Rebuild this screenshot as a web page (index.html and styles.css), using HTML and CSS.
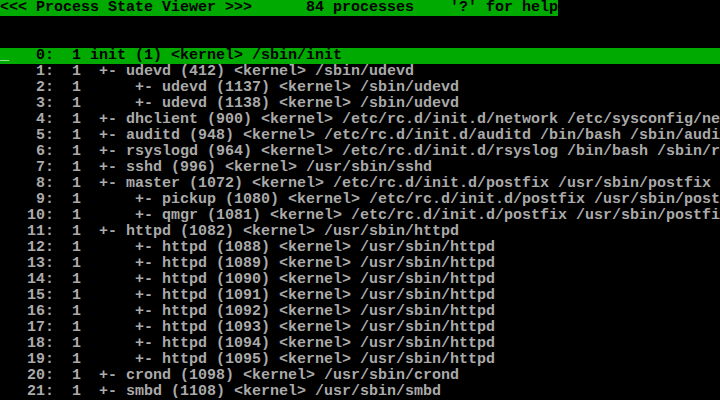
FILE: index.html
```html
<!DOCTYPE html>
<html lang='en'>
<head>
    <meta charset='UTF-8'>
    <title>Process State Viewer</title>
    <link rel="stylesheet" href="styles.css">
</head>

<body>
    <div class='screen'>
        <div class='row'><span class='title-bar'>&lt;&lt;&lt; Process State Viewer &gt;&gt;&gt;      84 processes    '?' for help</span></div>
        <div class='row'></div>
        <div class='row'></div>
        <div class='row selected'><span class='cursor'>_</span>   0:  1 init (1) &lt;kernel&gt; /sbin/init</div>
        <div class='row'>    1:  1  +- udevd (412) &lt;kernel&gt; /sbin/udevd</div>
        <div class='row'>    2:  1      +- udevd (1137) &lt;kernel&gt; /sbin/udevd</div>
        <div class='row'>    3:  1      +- udevd (1138) &lt;kernel&gt; /sbin/udevd</div>
        <div class='row'>    4:  1  +- dhclient (900) &lt;kernel&gt; /etc/rc.d/init.d/network /etc/sysconfig/ne</div>
        <div class='row'>    5:  1  +- auditd (948) &lt;kernel&gt; /etc/rc.d/init.d/auditd /bin/bash /sbin/audi</div>
        <div class='row'>    6:  1  +- rsyslogd (964) &lt;kernel&gt; /etc/rc.d/init.d/rsyslog /bin/bash /sbin/r</div>
        <div class='row'>    7:  1  +- sshd (996) &lt;kernel&gt; /usr/sbin/sshd</div>
        <div class='row'>    8:  1  +- master (1072) &lt;kernel&gt; /etc/rc.d/init.d/postfix /usr/sbin/postfix</div>
        <div class='row'>    9:  1      +- pickup (1080) &lt;kernel&gt; /etc/rc.d/init.d/postfix /usr/sbin/post</div>
        <div class='row'>   10:  1      +- qmgr (1081) &lt;kernel&gt; /etc/rc.d/init.d/postfix /usr/sbin/postfi</div>
        <div class='row'>   11:  1  +- httpd (1082) &lt;kernel&gt; /usr/sbin/httpd</div>
        <div class='row'>   12:  1      +- httpd (1088) &lt;kernel&gt; /usr/sbin/httpd</div>
        <div class='row'>   13:  1      +- httpd (1089) &lt;kernel&gt; /usr/sbin/httpd</div>
        <div class='row'>   14:  1      +- httpd (1090) &lt;kernel&gt; /usr/sbin/httpd</div>
        <div class='row'>   15:  1      +- httpd (1091) &lt;kernel&gt; /usr/sbin/httpd</div>
        <div class='row'>   16:  1      +- httpd (1092) &lt;kernel&gt; /usr/sbin/httpd</div>
        <div class='row'>   17:  1      +- httpd (1093) &lt;kernel&gt; /usr/sbin/httpd</div>
        <div class='row'>   18:  1      +- httpd (1094) &lt;kernel&gt; /usr/sbin/httpd</div>
        <div class='row'>   19:  1      +- httpd (1095) &lt;kernel&gt; /usr/sbin/httpd</div>
        <div class='row'>   20:  1  +- crond (1098) &lt;kernel&gt; /usr/sbin/crond</div>
        <div class='row'>   21:  1  +- smbd (1108) &lt;kernel&gt; /usr/sbin/smbd</div>
    </div>
</body>

</html>
```

FILE: styles.css
```css
* {
    margin: 0px;
    padding: 0px;
    box-sizing: border-box;
}

html {
    overflow: hidden;
}

body {
    background-color: #000;
    width: 720px;
    height: 400px;
    overflow: hidden;
}

.screen {
    display: flex;
    flex-direction: column;
    width: 720px;
    height: 400px;
    color: #aaaaaa;
    font-family: 'Liberation Mono', 'DejaVu Sans Mono', monospace;
    font-size: 15px;
    font-weight: bold;
    line-height: 16px;
}

.row {
    height: 16px;
    white-space: pre;
    overflow: hidden;
}

/* Header */
.title-bar {
    display: inline-block;
    background-color: #00aa00;
    color: #000;
}

/* Selected process */
.row.selected {
    background-color: #00aa00;
    color: #000;
}

.cursor {
    color: #fff;
}
```
